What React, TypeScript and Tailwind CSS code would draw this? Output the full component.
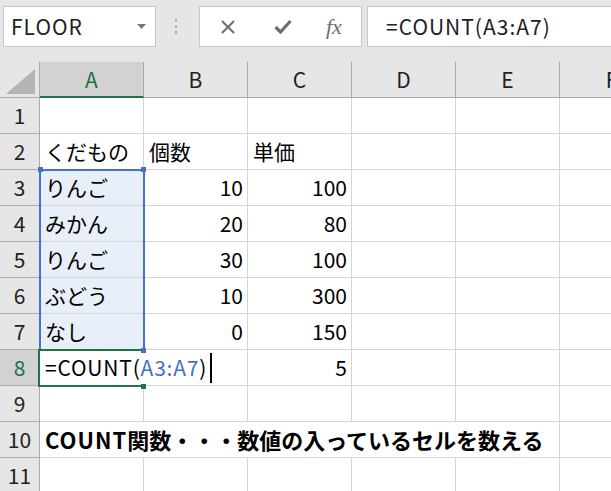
import React from 'react';

const FONT = { fontFamily: '"Noto Sans CJK JP", "Noto Sans", sans-serif' };

type Cell = { text?: React.ReactNode; align?: 'left' | 'right'; noRight?: boolean; bold?: boolean };

const rows: Cell[][] = [
  [{}, {}, {}, {}, {}, {}],
  [{ text: 'くだもの' }, { text: '個数' }, { text: '単価' }, {}, {}, {}],
  [{ text: 'りんご' }, { text: '10', align: 'right' }, { text: '100', align: 'right' }, {}, {}, {}],
  [{ text: 'みかん' }, { text: '20', align: 'right' }, { text: '80', align: 'right' }, {}, {}, {}],
  [{ text: 'りんご' }, { text: '30', align: 'right' }, { text: '100', align: 'right' }, {}, {}, {}],
  [{ text: 'ぶどう' }, { text: '10', align: 'right' }, { text: '300', align: 'right' }, {}, {}, {}],
  [{ text: 'なし' }, { text: '0', align: 'right' }, { text: '150', align: 'right' }, {}, {}, {}],
  [
    {
      text: (
        <span className="flex items-center tracking-[0.8px]">
          =COUNT(<span className="text-[#4472c4]">A3:A7</span>)
          <span className="ml-[3px] inline-block h-[30px] w-[2px] bg-black" />
        </span>
      ),
      noRight: true,
    },
    {},
    { text: '5', align: 'right' },
    {},
    {},
    {},
  ],
  [{}, {}, {}, {}, {}, {}],
  [
    {
      text: (
        <span className="text-[22px]">
          <span className="tracking-[1px]">COUNT</span>関数・・・数値の入っているセルを数える
        </span>
      ),
      noRight: true,
      bold: true,
    },
    { noRight: true },
    { noRight: true },
    { noRight: true },
    {},
    {},
  ],
  [{}, {}, {}, {}, {}, {}],
];

const cols = ['A', 'B', 'C', 'D', 'E', 'F'];

function Toolbar() {
  return (
    <div className="flex h-[62px] items-start bg-[#e6e6e6] pt-[6px]">
      <div className="ml-[3px] flex h-[41px] w-[153px] items-center justify-between border border-[#c6c6c6] bg-white pl-[7px] pr-[9px]">
        <span className="text-[21px] tracking-[1px] text-[#222]">FLOOR</span>
        <svg width="9" height="5" viewBox="0 0 9 5">
          <polygon points="0,0 9,0 4.5,5" fill="#777" />
        </svg>
      </div>
      <div className="ml-[19px] mt-[13px] flex flex-col gap-[3px]">
        <span className="block h-[3px] w-[2px] bg-[#b3b3b3]" />
        <span className="block h-[3px] w-[2px] bg-[#b3b3b3]" />
        <span className="block h-[3px] w-[2px] bg-[#b3b3b3]" />
      </div>
      <div className="ml-[22px] flex h-[41px] w-[163px] items-center border border-[#c6c6c6] bg-white">
        <svg className="ml-[20px]" width="16" height="16" viewBox="0 0 16 16">
          <path d="M2 2 L14 14 M14 2 L2 14" stroke="#6e6e6e" strokeWidth="2" />
        </svg>
        <svg className="ml-[38px]" width="18" height="15" viewBox="0 0 18 15">
          <path d="M1.5 8 L6.5 13 L16.5 2" stroke="#6e6e6e" strokeWidth="3.2" fill="none" />
        </svg>
        <span
          className="ml-[34px] text-[22px] italic text-[#6e6e6e]"
          style={{ fontFamily: '"Liberation Serif", "DejaVu Serif", serif' }}
        >
          fx
        </span>
      </div>
      <div className="ml-[5px] flex h-[41px] flex-1 items-center border border-r-0 border-[#c6c6c6] bg-white pl-[18px]">
        <span className="text-[21px] tracking-[1px] text-[#222]">=COUNT(A3:A7)</span>
      </div>
    </div>
  );
}

function Header() {
  return (
    <div className="flex h-[36px]">
      <div className="relative h-[36px] w-[40px] shrink-0 border-b border-r border-[#ababab] bg-[#e6e6e6]">
        <svg className="absolute bottom-[3px] right-[4px]" width="29" height="25" viewBox="0 0 29 25">
          <polygon points="29,0 29,25 0,25" fill="#b4b4b4" />
        </svg>
      </div>
      {cols.map((c, i) => (
        <div
          key={c}
          className={
            i === 0
              ? 'flex h-[36px] w-[104px] shrink-0 items-center justify-center border-b-2 border-r border-b-[#217346] border-r-[#ababab] bg-[#d2d2d2] pt-[2px] text-[21px] text-[#217346]'
              : 'flex h-[36px] w-[104px] shrink-0 items-center justify-center border-b border-r border-[#ababab] bg-[#e6e6e6] text-[21px] text-[#222]'
          }
        >
          {c}
        </div>
      ))}
    </div>
  );
}

export default function App() {
  return (
    <div className="h-[491px] w-[611px] overflow-hidden bg-white" style={FONT}>
      <Toolbar />
      <div className="relative">
        <Header />
        {rows.map((row, r) => {
          const n = r + 1;
          const active = n === 8;
          return (
            <div key={n} className="flex h-[36px]">
              <div
                className={
                  active
                    ? 'flex h-[36px] w-[40px] shrink-0 items-center justify-center border-b border-r border-[#ababab] bg-[#d2d2d2] text-[21px] text-[#217346]'
                    : 'flex h-[36px] w-[40px] shrink-0 items-center justify-center border-b border-r border-[#ababab] bg-[#e6e6e6] text-[21px] text-[#222]'
                }
              >
                {n}
              </div>
              {row.map((cell, c) => {
                const sel = c === 0 && n >= 3 && n <= 7;
                return (
                  <div
                    key={c}
                    className={[
                      'relative flex h-[36px] w-[104px] shrink-0 items-center border-b border-[#d4d4d4] text-[21px] text-black',
                      cell.noRight ? 'border-r border-r-transparent' : 'border-r',
                      sel ? 'bg-[#e8eff9]' : 'bg-white',
                      cell.align === 'right' ? 'justify-end pr-[4px]' : 'justify-start pl-[5px]',
                      cell.bold ? 'font-bold' : '',
                    ].join(' ')}
                  >
                    {cell.text !== undefined && (
                      <span className={cell.noRight ? 'relative z-10 whitespace-nowrap' : 'whitespace-nowrap'}>{cell.text}</span>
                    )}
                  </div>
                );
              })}
            </div>
          );
        })}

        {/* range finder A3:A7 */}
        <div className="pointer-events-none absolute left-[39px] top-[107px] h-[182px] w-[106px] border-2 border-[#4472c4]" />
        <div className="absolute left-[38px] top-[105px] h-[5px] w-[5px] bg-[#4472c4]" />
        <div className="absolute left-[141px] top-[105px] h-[5px] w-[5px] bg-[#4472c4]" />
        <div className="absolute left-[141px] top-[286px] h-[5px] w-[5px] bg-[#4472c4]" />

        {/* active cell A8 */}
        <div className="pointer-events-none absolute left-[38px] top-[287px] h-[38px] w-[103px] border-b-2 border-l-2 border-t-2 border-[#217346]" />
        <div className="absolute left-[141px] top-[322px] h-[5px] w-[5px] bg-[#217346]" />
      </div>
    </div>
  );
}
